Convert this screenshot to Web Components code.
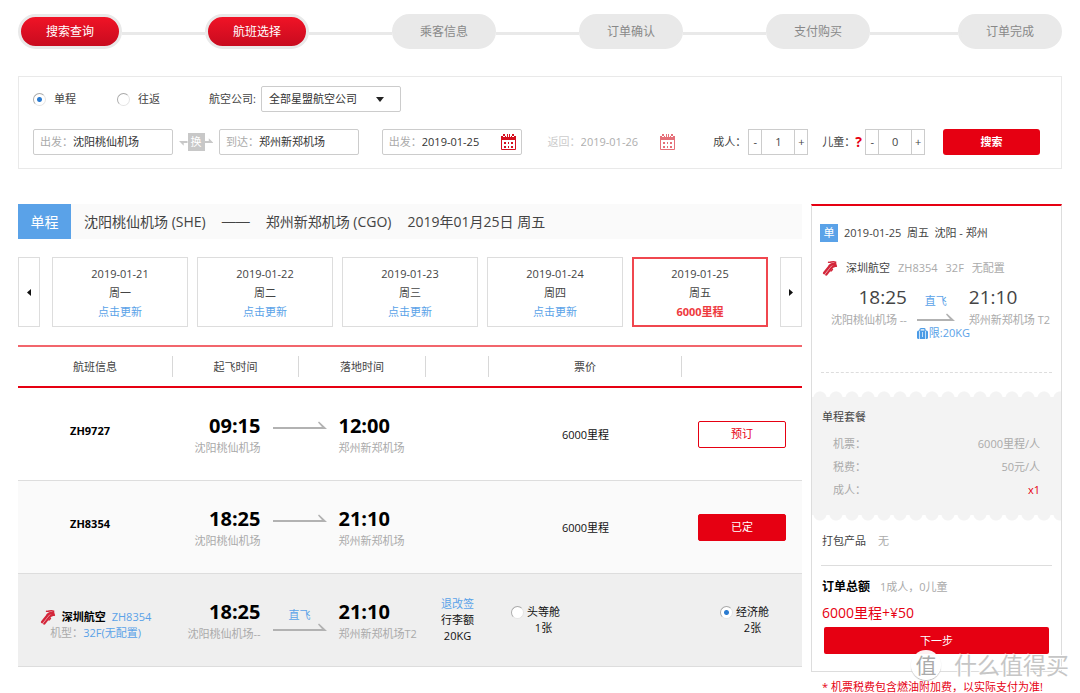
<!DOCTYPE html>
<html lang="zh-CN">
<head>
<meta charset="utf-8">
<meta name="viewport" content="width=device-width, initial-scale=1">
<title>航班选择</title>
<style>
  :root {
    --red: #e60012;
    --blue: #5aa2e8;
    --muted: #aaa;
    --line: #ddd;
  }
  body {
    margin: 0;
    background: #fff;
    color: #444;
    font: 11px/16px "Open Sans", "Noto Sans CJK SC", sans-serif;
  }
</style>
</head>
<body>
<booking-page></booking-page>

<script>
const define = (name, html, setup) => {
  const template = document.createElement('template');
  template.innerHTML = html;
  customElements.define(name, class extends HTMLElement {
    constructor() {
      super();
      this.attachShadow({ mode: 'open' }).append(template.content.cloneNode(true));
    }
    connectedCallback() {
      if (setup && !this.ready) setup(this, this.shadowRoot);
      this.ready = true;
    }
  });
};

/* ---------- icons ---------- */
define('airline-logo', `
  <style>:host{display:block;width:16px;height:16px;flex:none} svg{display:block}</style>
  <svg width="16" height="16" viewBox="0 0 16 16" fill="none" stroke="#d3263a" stroke-linecap="round">
    <path d="M6.500 2.300C9 2.600 11 .8 13.600 2.200L12.500 3.600" stroke-width="1.400"/>
    <path d="M13.300 4.300C10.500 3.600 8.300 4.600 7 7L2.200 13" stroke-width="2.700"/>
    <path d="M14 6C11.500 5.600 10 7 8.600 9L4.300 14.600" stroke-width="2.200"/>
    <path d="M9.500 6L3 14" stroke="#f0a9b2" stroke-width=".6"/>
    <path d="M10.500 9.500L9 11" stroke-width="1.400"/>
  </svg>`);

define('flight-arrow', `
  <style>:host{display:block} svg{display:block}</style>
  <svg height="9" fill="#b2b2b2"></svg>`, (el, root) => {
  const w = Number(el.getAttribute('length'));
  const svg = root.querySelector('svg');
  svg.setAttribute('width', w);
  svg.setAttribute('viewBox', `0 0 ${w} 9`);
  svg.innerHTML = `<path d="M0 6H${w - 5}L${w - 9} 1.500L${w - 8} .5L${w} 8H0Z"/>`;
});

define('calendar-icon', `
  <style>:host{display:block;width:15px;height:16px;flex:none} svg{display:block}</style>
  <svg width="15" height="16" viewBox="0 0 15 16">
    <path fill="#d5101f" d="M0 2h2v1h2V2h1v1h5V2h1v1h2V2h2v4H0zM2 0h2v2H2zM6 0h1v3H6zM8 0h1v3H8zM11 0h2v2h-2z"/>
    <path fill="none" stroke="#d5101f" d="M.5 5.500v10h14v-10"/>
    <path fill="#d5101f" d="M3 8h2v2H3zM7 8h1v2H7zM10 8h2v2h-2zM3 12h2v2H3zM7 12h1v2H7zM10 12h2v2h-2z"/>
  </svg>`);

define('luggage-icon', `
  <style>:host{display:block;width:11px;height:11px;flex:none} svg{display:block}</style>
  <svg width="11" height="11" viewBox="0 0 11 11">
    <path d="M3 3V1.500Q3 .7 4 .7H7Q8 .7 8 1.500V3" fill="none" stroke="#4b9be6" stroke-width="1.200"/>
    <rect y="2.500" width="11" height="8.500" rx="1.500" fill="#4b9be6"/>
    <path d="M2.500 3v8M5.500 4v5M8.500 3v8" stroke="#fff" stroke-width=".7"/>
  </svg>`);

/* ---------- progress steps ---------- */
define('step-pill', `
  <style>
    :host{display:block;flex:none;box-sizing:border-box;width:104px;height:35px;border:3px solid #e9e9e9;border-radius:18px;
      background:#e9e9e9;color:#888;font-size:12px;line-height:29px;text-align:center}
    :host([done]){background:linear-gradient(#f01326,#c80b1f);color:#fff}
  </style><slot></slot>`);

define('step-bar', `
  <style>
    :host{display:flex;align-items:center}
    i{flex:83;height:3px;margin-top:4px;background:#e9e9e9}
    i.last{flex:88}
  </style>
  <step-pill done>搜索查询</step-pill><i></i>
  <step-pill done>航班选择</step-pill><i></i>
  <step-pill>乘客信息</step-pill><i></i>
  <step-pill>订单确认</step-pill><i></i>
  <step-pill>支付购买</step-pill><i class="last"></i>
  <step-pill>订单完成</step-pill>`);

/* ---------- form controls ---------- */
const radioCss = `
  input[type=radio]{appearance:none;box-sizing:border-box;flex:none;width:13px;height:13px;margin:0;border:1px solid #e4e4e4;
    border-top-color:#aaa;border-left-color:#aaa;border-radius:50%;background:#fff}
  input[type=radio]:checked{background:radial-gradient(circle,#2b7bd0 2px,#fff 3px)}`;

define('text-field', `
  <style>
    :host{display:block;flex:none;width:140px}
    div{display:flex;align-items:center;box-sizing:border-box;height:26px;padding:0 5px 0 6px;border:1px solid #ccc;border-radius:2px}
    label{flex:none;color:#aaa}
    input{flex:1;min-width:0;padding:0;border:0;background:none;color:#333;font:inherit;outline:0}
    :host([off]) div{border-color:transparent;opacity:.6}
    :host([off]) input{color:#777}
  </style>
  <div><label for="f"></label><input id="f" type="text"><slot></slot></div>`, (el, root) => {
  root.querySelector('label').textContent = el.getAttribute('label');
  root.querySelector('input').setAttribute('value', el.getAttribute('value'));
  root.querySelector('input').disabled = el.hasAttribute('off');
});

define('count-stepper', `
  <style>
    :host{display:flex;align-items:center;flex:none}
    .box{display:flex;box-sizing:border-box;width:60px;height:26px;margin-left:2px;border:1px solid #ccc}
    button{flex:none;width:12px;padding:0;border:0;background:none;color:#444;font:inherit}
    input{flex:1;min-width:0;padding:0;border:solid #ccc;border-width:0 1px;background:none;color:#444;font:inherit;text-align:center;outline:0}
    ::slotted(b){width:8px;color:var(--red);font-size:14px}
  </style>
  <label for="n"></label><slot></slot>
  <div class="box"><button type="button" aria-label="减少">-</button><input id="n" type="text"><button type="button" aria-label="增加">+</button></div>`,
  (el, root) => {
    root.querySelector('label').textContent = el.getAttribute('label');
    const input = root.querySelector('input');
    input.setAttribute('value', el.getAttribute('value'));
    const [minus, plus] = root.querySelectorAll('button');
    minus.onclick = () => { input.value = Math.max(0, Number(input.value) - 1); };
    plus.onclick = () => { input.value = Number(input.value) + 1; };
  });

define('search-panel', `
  <style>
    :host{display:block;padding:9px 14px 13px;border:1px solid #e9e9e9}
    .row{display:flex;align-items:center;height:26px}
    .row + .row{margin-top:17px}
    ${radioCss}
    .choice{display:flex;align-items:center;gap:8px;width:84px}
    .airline{margin-left:8px}
    .pick{display:flex;align-items:center;width:140px;margin-left:5px;position:relative}
    select{appearance:none;width:100%;height:26px;padding:0 7px;border:1px solid #ccc;border-radius:2px;background:#fff;color:#333;font:inherit}
    .pick svg{position:absolute;right:17px;top:11px;pointer-events:none}
    .swap{display:block;flex:none;width:46px;height:26px;padding:0 6px;border:0;background:none}
    .swap span{display:flex;align-items:center}
    .swap b{flex:none;width:17px;background:#c8c8c8;color:#fff;font:11px/18px "Open Sans","Noto Sans CJK SC",sans-serif}
    .spring{flex:1 1 0}
    .search{flex:none;width:97px;height:26px;padding:0;border:0;border-radius:3px;background:var(--red);color:#fff;font:inherit;font-weight:600}
    .end{width:7px}
  </style>
  <form>
    <div class="row">
      <label class="choice"><input type="radio" name="trip" checked>单程</label>
      <label class="choice"><input type="radio" name="trip">往返</label>
      <label class="airline" for="airline">航空公司:</label>
      <div class="pick">
        <select id="airline"><option>全部星盟航空公司</option></select>
        <svg width="8" height="5" viewBox="0 0 8 5"><path d="M0 0h8L4 5z" fill="#222"/></svg>
      </div>
    </div>
    <div class="row">
      <text-field label="出发：" value="沈阳桃仙机场"></text-field>
      <button class="swap" type="button"><span>
        <svg width="9" height="9" viewBox="0 0 9 9"><path d="M0 3h9v2H5v3z" fill="#c8c8c8"/></svg>
        <b>换</b>
        <svg width="9" height="9" viewBox="0 0 9 9"><path d="M9 5H0V3h4V0z" fill="#c8c8c8"/></svg>
      </span></button>
      <text-field label="到达：" value="郑州新郑机场"></text-field>
      <i class="spring" style="flex-grow:23"></i>
      <text-field label="出发：" value="2019-01-25"><calendar-icon></calendar-icon></text-field>
      <i class="spring" style="flex-grow:19"></i>
      <text-field off label="返回：" value="2019-01-26"><calendar-icon></calendar-icon></text-field>
      <i class="spring" style="flex-grow:33"></i>
      <count-stepper label="成人：" value="1"></count-stepper>
      <i class="spring" style="flex-grow:14"></i>
      <count-stepper label="儿童：" value="0"><b>?</b></count-stepper>
      <i class="spring" style="flex-grow:18"></i>
      <button class="search" type="button">搜索</button>
      <i class="end"></i>
    </div>
  </form>`);

/* ---------- route heading and date strip ---------- */
define('route-title', `
  <style>
    :host{display:block;background:#fafafa}
    h1{display:flex;gap:13px;margin:0;font-size:14px;line-height:35px;font-weight:400;white-space:nowrap}
    b{width:53px;background:var(--blue);color:#fff;font-weight:400;text-align:center}
    .route{display:flex;gap:16px}
    .dash{font-family:"Liberation Sans",sans-serif}
  </style>
  <h1><b>单程</b><span class="route"><span>沈阳桃仙机场 (SHE)</span><span class="dash">——</span><span>郑州新郑机场 (CGO)</span><span>2019年01月25日 周五</span></span></h1>`);

define('date-tab', `
  <style>
    :host{display:block;flex:1}
    button{display:block;box-sizing:border-box;width:100%;height:70px;padding:0;border:1px solid var(--line);background:#fff;color:#444;font:inherit;line-height:19px}
    span{display:block}
    .note{color:var(--blue)}
    :host([selected]) button{border:2px solid #f0474f}
    :host([selected]) .note{color:#ee3a40;font-weight:700}
  </style>
  <button type="button"><span class="date"></span><span class="day"></span><span class="note"><slot></slot></span></button>`, (el, root) => {
  root.querySelector('.date').textContent = el.getAttribute('date');
  root.querySelector('.day').textContent = el.getAttribute('day');
});

define('date-strip', `
  <style>
    :host{display:flex;gap:12px}
    div{display:flex;flex:1;gap:9px}
    button{flex:none;width:22px;height:70px;padding:0;border:1px solid var(--line);background:#fff}
    svg{display:block;margin:auto}
  </style>
  <button type="button" aria-label="前一天"><svg width="4" height="7" viewBox="0 0 4 7"><path d="M4 0v7L0 3.500z" fill="#111"/></svg></button>
  <div>
    <date-tab date="2019-01-21" day="周一">点击更新</date-tab>
    <date-tab date="2019-01-22" day="周二">点击更新</date-tab>
    <date-tab date="2019-01-23" day="周三">点击更新</date-tab>
    <date-tab date="2019-01-24" day="周四">点击更新</date-tab>
    <date-tab date="2019-01-25" day="周五" selected>6000里程</date-tab>
  </div>
  <button type="button" aria-label="后一天"><svg width="4" height="7" viewBox="0 0 4 7"><path d="M0 0v7l4-3.500z" fill="#111"/></svg></button>`);

/* ---------- flight list ---------- */
define('flight-leg', `
  <style>
    :host{display:grid;grid-template-columns:1fr 54px 1fr;column-gap:12px;white-space:nowrap}
    .from{text-align:right}
    .to{text-align:left}
    b{display:block;color:#000;font-size:20px;line-height:26px}
    span{display:block;margin-top:1px;line-height:16px;color:var(--muted)}
    .mid{padding-top:8px;text-align:center}
    .mid div{height:16px;color:var(--blue)}
    .mid div:empty{height:0}
  </style>
  <div class="from"><b></b><span></span></div>
  <div class="mid"><div></div><flight-arrow length="54"></flight-arrow></div>
  <div class="to"><b></b><span></span></div>`, (el, root) => {
  const put = (sel, attr) => { root.querySelector(sel).textContent = el.getAttribute(attr) || ''; };
  put('.from b', 'depart'); put('.from span', 'origin');
  put('.to b', 'arrive'); put('.to span', 'target'); put('.mid div', 'kind');
});

define('flight-table', `
  <style>
    :host{display:block}
    table{width:100%;border-collapse:separate;border-spacing:0;table-layout:fixed;border-top:2px solid #f2666c}
    th{height:39px;padding:0;border-bottom:2px solid var(--red);font-weight:400}
    th span{display:block;height:21px;line-height:22px;border-right:1px solid #d8d8d8}
    th:last-child span{border:0}
    td{box-sizing:border-box;height:93px;padding:0;border-bottom:1px solid var(--line);text-align:center;color:#111}
    tr.alt td{background:#fafafa}
    tr.open td{background:#efefef}
    .no{padding:0 11px 6px 0;color:#000;font-weight:700}
    .price{padding-top:2px}
    button{width:88px;height:27px;padding:0;border:1px solid var(--red);border-radius:2px;background:#fff;color:var(--red);font:inherit}
    button.done{background:var(--red);color:#fff}
    .info{display:flex;align-items:center;justify-content:center;gap:6px;height:16px;margin-top:9px}
    .info strong{color:#000;font-weight:600}
    a{color:var(--blue);text-decoration:none}
    small{font-size:11px;color:var(--muted)}
    ${radioCss}
    label{display:inline-grid;grid-template-columns:13px auto;column-gap:3px;align-items:center;text-align:center}
    label small{grid-column:2;color:#111}
    .first{padding-left:22px;text-align:left}
    .eco{padding-left:5px}
  </style>
  <table>
    <colgroup><col style="width:155px"><col style="width:126px"><col style="width:127px"><col style="width:63px"><col style="width:193px"><col></colgroup>
    <thead><tr>
      <th><span>航班信息</span></th><th><span>起飞时间</span></th><th><span>落地时间</span></th>
      <th><span></span></th><th><span>票价</span></th><th><span></span></th>
    </tr></thead>
    <tbody>
      <tr>
        <td class="no">ZH9727</td>
        <td colspan="2"><flight-leg depart="09:15" origin="沈阳桃仙机场" arrive="12:00" target="郑州新郑机场"></flight-leg></td>
        <td></td><td class="price">6000里程</td><td><button type="button">预订</button></td>
      </tr>
      <tr class="alt">
        <td class="no">ZH8354</td>
        <td colspan="2"><flight-leg depart="18:25" origin="沈阳桃仙机场" arrive="21:10" target="郑州新郑机场"></flight-leg></td>
        <td></td><td class="price">6000里程</td><td><button type="button" class="done">已定</button></td>
      </tr>
      <tr class="open">
        <td><div class="info"><airline-logo></airline-logo><strong>深圳航空</strong><a href="#flight">ZH8354</a></div>
          <small>机型：</small><a href="#plane">32F(无配置)</a></td>
        <td colspan="2"><flight-leg depart="18:25" origin="沈阳桃仙机场--" arrive="21:10" target="郑州新郑机场T2" kind="直飞"></flight-leg></td>
        <td><a href="#rules">退改签</a><br>行李额<br>20KG</td>
        <td class="first"><label><input type="radio" name="cabin">头等舱<small>1张</small></label></td>
        <td class="eco"><label><input type="radio" name="cabin" checked>经济舱<small>2张</small></label></td>
      </tr>
    </tbody>
  </table>`);

/* ---------- order summary ---------- */
define('ticket-band', `
  <style>
    :host{display:block;color:var(--muted)}
    .edge{height:6px;background:radial-gradient(circle at 8px 7px,#f3f3f3 6px,transparent 7px) 0 0/16px 6px repeat-x}
    .edge.low{background:radial-gradient(circle at 8px -1px,#f3f3f3 6px,transparent 7px) 0 0/16px 6px repeat-x}
    .body{padding:12px 21px 14px 10px;background:#f3f3f3}
    h2{margin:0 0 7px;color:#444;font-size:11px;line-height:16px;font-weight:400}
    dl{display:grid;grid-template-columns:auto auto;justify-content:space-between;margin:0;padding-left:11px;line-height:23px}
    dd{margin:0;text-align:right}
    .n{color:var(--red)}
  </style>
  <div class="edge"></div>
  <div class="body">
    <h2>单程套餐</h2>
    <dl><dt>机票：</dt><dd>6000里程/人</dd><dt>税费：</dt><dd>50元/人</dd><dt>成人：</dt><dd class="n">x1</dd></dl>
  </div>
  <div class="edge low"></div>`);

define('order-summary', `
  <style>
    :host{display:block}
    section{border:1px solid var(--line);border-top:2px solid var(--red);padding-bottom:17px}
    .head,.plane,.pack,.total{display:flex;align-items:center;white-space:nowrap}
    .head{gap:6px;padding:18px 8px 0;height:18px}
    .head b{width:18px;background:var(--blue);color:#fff;font-weight:400;line-height:18px;text-align:center}
    .plane{gap:8px;padding:18px 10px 0;color:var(--muted)}
    .plane strong{color:#444;font-weight:400}
    .leg{display:grid;grid-template-columns:auto 42px auto;column-gap:10px;justify-content:center;padding:8px 4px 0 12px;white-space:nowrap;color:var(--muted)}
    .leg b{display:block;margin-bottom:2px;color:#444;font-size:19px;line-height:26px;font-weight:400}
    .leg .from{text-align:right}
    .leg .mid{padding-top:9px}
    .leg .kind{display:block;width:38px;margin-bottom:4px;color:var(--blue);text-align:center}
    .bag{display:flex;align-items:center;gap:1px;margin-top:3px;color:var(--blue);line-height:16px}
    .dash{margin:31px 9px 18px;border-top:1px dashed var(--line)}
    .pack{gap:12px;padding:12px 10px 16px;color:var(--muted)}
    .pack strong{color:#444;font-weight:400}
    .rule{margin:0 9px;border-top:1px solid var(--line)}
    .total{gap:10px;padding:13px 10px 0;color:var(--muted)}
    .total strong{color:#000;font-size:12px}
    .sum{margin:8px 10px 4px;color:var(--red);font-size:14px;line-height:20px}
    button{display:block;width:calc(100% - 24px);height:27px;margin:0 12px;padding:0;border:0;border-radius:2px;background:var(--red);color:#fff;font:inherit}
    p{margin:7px 0 0 11px;color:var(--red);line-height:15px;white-space:nowrap}
  </style>
  <section>
    <div class="head"><b>单</b><span>2019-01-25&ensp;周五&ensp;沈阳 - 郑州</span></div>
    <div class="plane"><airline-logo></airline-logo><strong>深圳航空</strong><span>ZH8354</span><span>32F</span><span>无配置</span></div>
    <div class="leg">
      <div class="from"><b>18:25</b>沈阳桃仙机场 --</div>
      <div class="mid"><span class="kind">直飞</span><flight-arrow length="38"></flight-arrow>
        <span class="bag"><luggage-icon></luggage-icon>限:20KG</span></div>
      <div><b>21:10</b>郑州新郑机场 T2</div>
    </div>
    <div class="dash"></div>
    <ticket-band></ticket-band>
    <div class="pack"><strong>打包产品</strong><span>无</span></div>
    <div class="rule"></div>
    <div class="total"><strong>订单总额</strong><span>1成人，0儿童</span></div>
    <div class="sum">6000里程+¥50</div>
    <button type="button">下一步</button>
  </section>
  <p>* 机票税费包含燃油附加费，以实际支付为准!</p>`);

define('site-watermark', `
  <style>
    :host{display:flex;align-items:center;gap:13px;color:#c6c6c6;pointer-events:none;font-size:23px;line-height:30px;
      text-shadow:1px 1px 0 #fff,-1px -1px 0 #fff}
    b{width:30px;height:30px;border-radius:50%;background:#fffffff0;box-shadow:0 1px 1px #bbb;color:#aaa;font-size:21px;font-weight:400;text-align:center}
  </style><b>值</b><span>什么值得买</span>`);

define('booking-page', `
  <style>
    :host{display:block;position:relative;padding:14px 18px 0}
    search-panel{margin-top:27px}
    main{display:grid;grid-template-columns:minmax(0,1fr) 251px;column-gap:9px;align-items:start;margin-top:35px}
    date-strip{margin-top:18px}
    flight-table{margin-top:18px}
    site-watermark{position:absolute;right:11px;bottom:14px}
  </style>
  <step-bar></step-bar>
  <search-panel></search-panel>
  <main>
    <div><route-title></route-title><date-strip></date-strip><flight-table></flight-table></div>
    <order-summary></order-summary>
  </main>
  <site-watermark></site-watermark>`);
</script>
</body>
</html>
